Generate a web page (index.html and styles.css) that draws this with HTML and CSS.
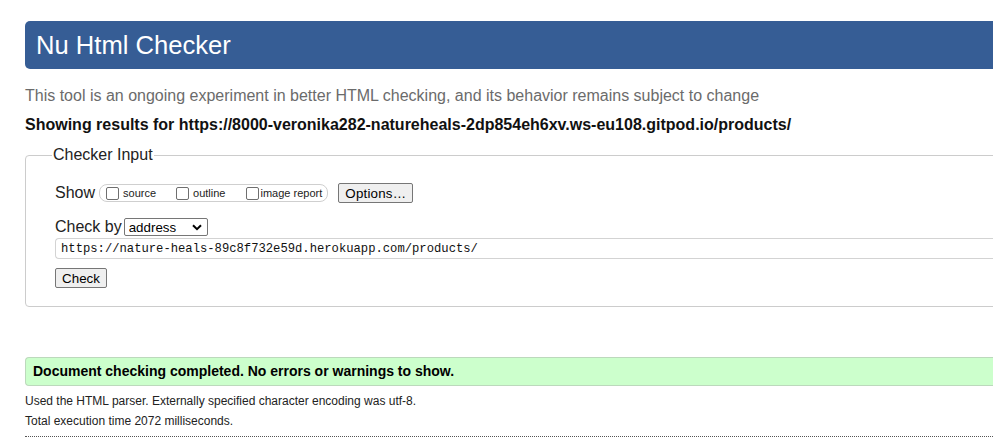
FILE: index.html
```html
<!DOCTYPE html>
<html lang="en">
<head>
<meta charset="utf-8">
<title>Nu Html Checker</title>
<link rel="stylesheet" href="styles.css">
</head>
<body>
<div class="page">
  <h1 class="banner">Nu Html Checker</h1>
  <p class="tagline">This tool is an ongoing experiment in better HTML checking, and its behavior remains subject to change</p>
  <p class="results-for">Showing results for https://8000-veronika282-natureheals-2dp854eh6xv.ws-eu108.gitpod.io/products/</p>
  <fieldset class="checker">
    <legend class="checker-legend">Checker Input</legend>
    <div class="row show-row">
      <span class="row-label">Show</span>
      <span class="opts">
        <label class="opt opt-source"><input type="checkbox" class="cb"><span>source</span></label>
        <label class="opt opt-outline"><input type="checkbox" class="cb"><span>outline</span></label>
        <label class="opt opt-image"><input type="checkbox" class="cb"><span>image report</span></label>
      </span>
      <button class="btn btn-options" type="button">Options…</button>
    </div>
    <div class="row by-row">
      <span class="row-label">Check by</span>
      <span class="select-wrap">
        <select class="select"><option>address</option></select>
        <svg class="chev" width="10" height="7" viewBox="0 0 10 7"><path d="M1 1.2 L5 5.2 L9 1.2" fill="none" stroke="#000" stroke-width="2"/></svg>
      </span>
    </div>
    <div class="url-box">https://nature-heals-89c8f732e59d.herokuapp.com/products/</div>
    <div class="row check-row">
      <button class="btn btn-check" type="button">Check</button>
    </div>
  </fieldset>
  <p class="success">Document checking completed. No errors or warnings to show.</p>
  <p class="details">Used the HTML parser. Externally specified character encoding was utf-8.</p>
  <p class="details details-time">Total execution time 2072 milliseconds.</p>
  <hr class="dotted">
</div>
</body>
</html>
```
FILE: styles.css
```css
html, body {
  margin: 0;
  padding: 0;
  background: #ffffff;
  overflow: hidden;
}
body {
  font-family: "Liberation Sans", Arial, sans-serif;
  color: #000;
}
.page {
  margin-left: 25px;
  width: 1100px;
  padding-top: 21px;
}
.banner {
  margin: 0;
  height: 48px;
  line-height: 48px;
  padding-left: 11px;
  background: #365d95;
  color: #fff;
  font-weight: normal;
  font-size: 25.6px;
  border-radius: 5px 0 0 5px;
}
.tagline {
  margin: 18px 0 0;
  font-size: 16px;
  line-height: 18px;
  color: #6b6b6b;
}
.results-for {
  margin: 11px 0 0;
  font-size: 16px;
  line-height: 18px;
  font-weight: bold;
  color: #111;
}
.checker {
  margin: 12px 0 0;
  border: 1px solid #cccccc;
  border-radius: 4px;
  padding: 0 0 18px 29px;
}
.checker-legend {
  margin-left: -3px;
  padding: 0 1px;
  font-size: 16px;
  line-height: 18px;
  color: #222;
}
.row {
  display: flex;
  align-items: center;
}
.show-row {
  margin-top: 19px;
  height: 20px;
}
.row-label {
  font-size: 16px;
  line-height: 18px;
  color: #222;
}
.opts {
  display: flex;
  align-items: center;
  height: 16px;
  margin-left: 4px;
  padding: 0 5px 0 6px;
  border: 1px solid #cfcfcf;
  border-radius: 8px;
}
.opt {
  display: flex;
  align-items: center;
  font-size: 11px;
  color: #222;
}
.opt-outline { margin-left: 20px; }
.opt-image { margin-left: 21px; }
.cb {
  appearance: none;
  -webkit-appearance: none;
  width: 13px;
  height: 13px;
  margin: 0 4px 0 0;
  border: 1px solid #6f6f6f;
  border-radius: 2px;
  background: #fff;
  box-sizing: border-box;
}
.opt-image .cb { margin-right: 1px; }
.btn {
  font-family: "Liberation Sans", Arial, sans-serif;
  font-size: 13.33px;
  color: #000;
  background: #efefef;
  border: 1px solid #767676;
  border-radius: 2px;
  height: 20px;
  padding: 0 6px;
  box-sizing: border-box;
}
.btn-options {
  margin-left: 10px;
  width: 75px;
  letter-spacing: 0.2px;
}
.by-row {
  margin-top: 15px;
  height: 18px;
}
.select-wrap {
  position: relative;
  display: inline-block;
  margin-left: 2px;
  height: 18px;
}
.select {
  appearance: none;
  -webkit-appearance: none;
  width: 84px;
  height: 18px;
  box-sizing: border-box;
  border: 1px solid #767676;
  border-radius: 2px;
  background: #fff;
  font-family: "Liberation Sans", Arial, sans-serif;
  font-size: 13.33px;
  color: #000;
  padding: 0 0 0 4px;
  margin: 0;
  display: block;
}
.chev {
  position: absolute;
  right: 6px;
  top: 6px;
  pointer-events: none;
}
.url-box {
  margin-top: 2px;
  height: 21px;
  box-sizing: border-box;
  border: 1px solid #d3d3d3;
  border-right: none;
  border-radius: 4px 0 0 4px;
  padding-left: 5px;
  font-family: "Liberation Mono", "DejaVu Sans Mono", monospace;
  font-size: 12.2px;
  line-height: 20px;
  color: #111;
}
.check-row {
  margin-top: 9px;
}
.btn-check {
  width: 52px;
  padding: 0;
}
.success {
  margin: 50px 0 0;
  height: 29px;
  box-sizing: border-box;
  background: #ccffcc;
  border: 1px solid #bcd9bc;
  border-right: none;
  border-radius: 4px 0 0 4px;
  padding-left: 7px;
  font-weight: bold;
  font-size: 14px;
  line-height: 27px;
  color: #000;
}
.details {
  margin: 8px 0 0;
  font-size: 12px;
  line-height: 14px;
  color: #222;
}
.details-time {
  margin-top: 6px;
}
.dotted {
  margin: 8px 0 0;
  border: none;
  border-top: 1px dotted #555;
  height: 0;
}
```
